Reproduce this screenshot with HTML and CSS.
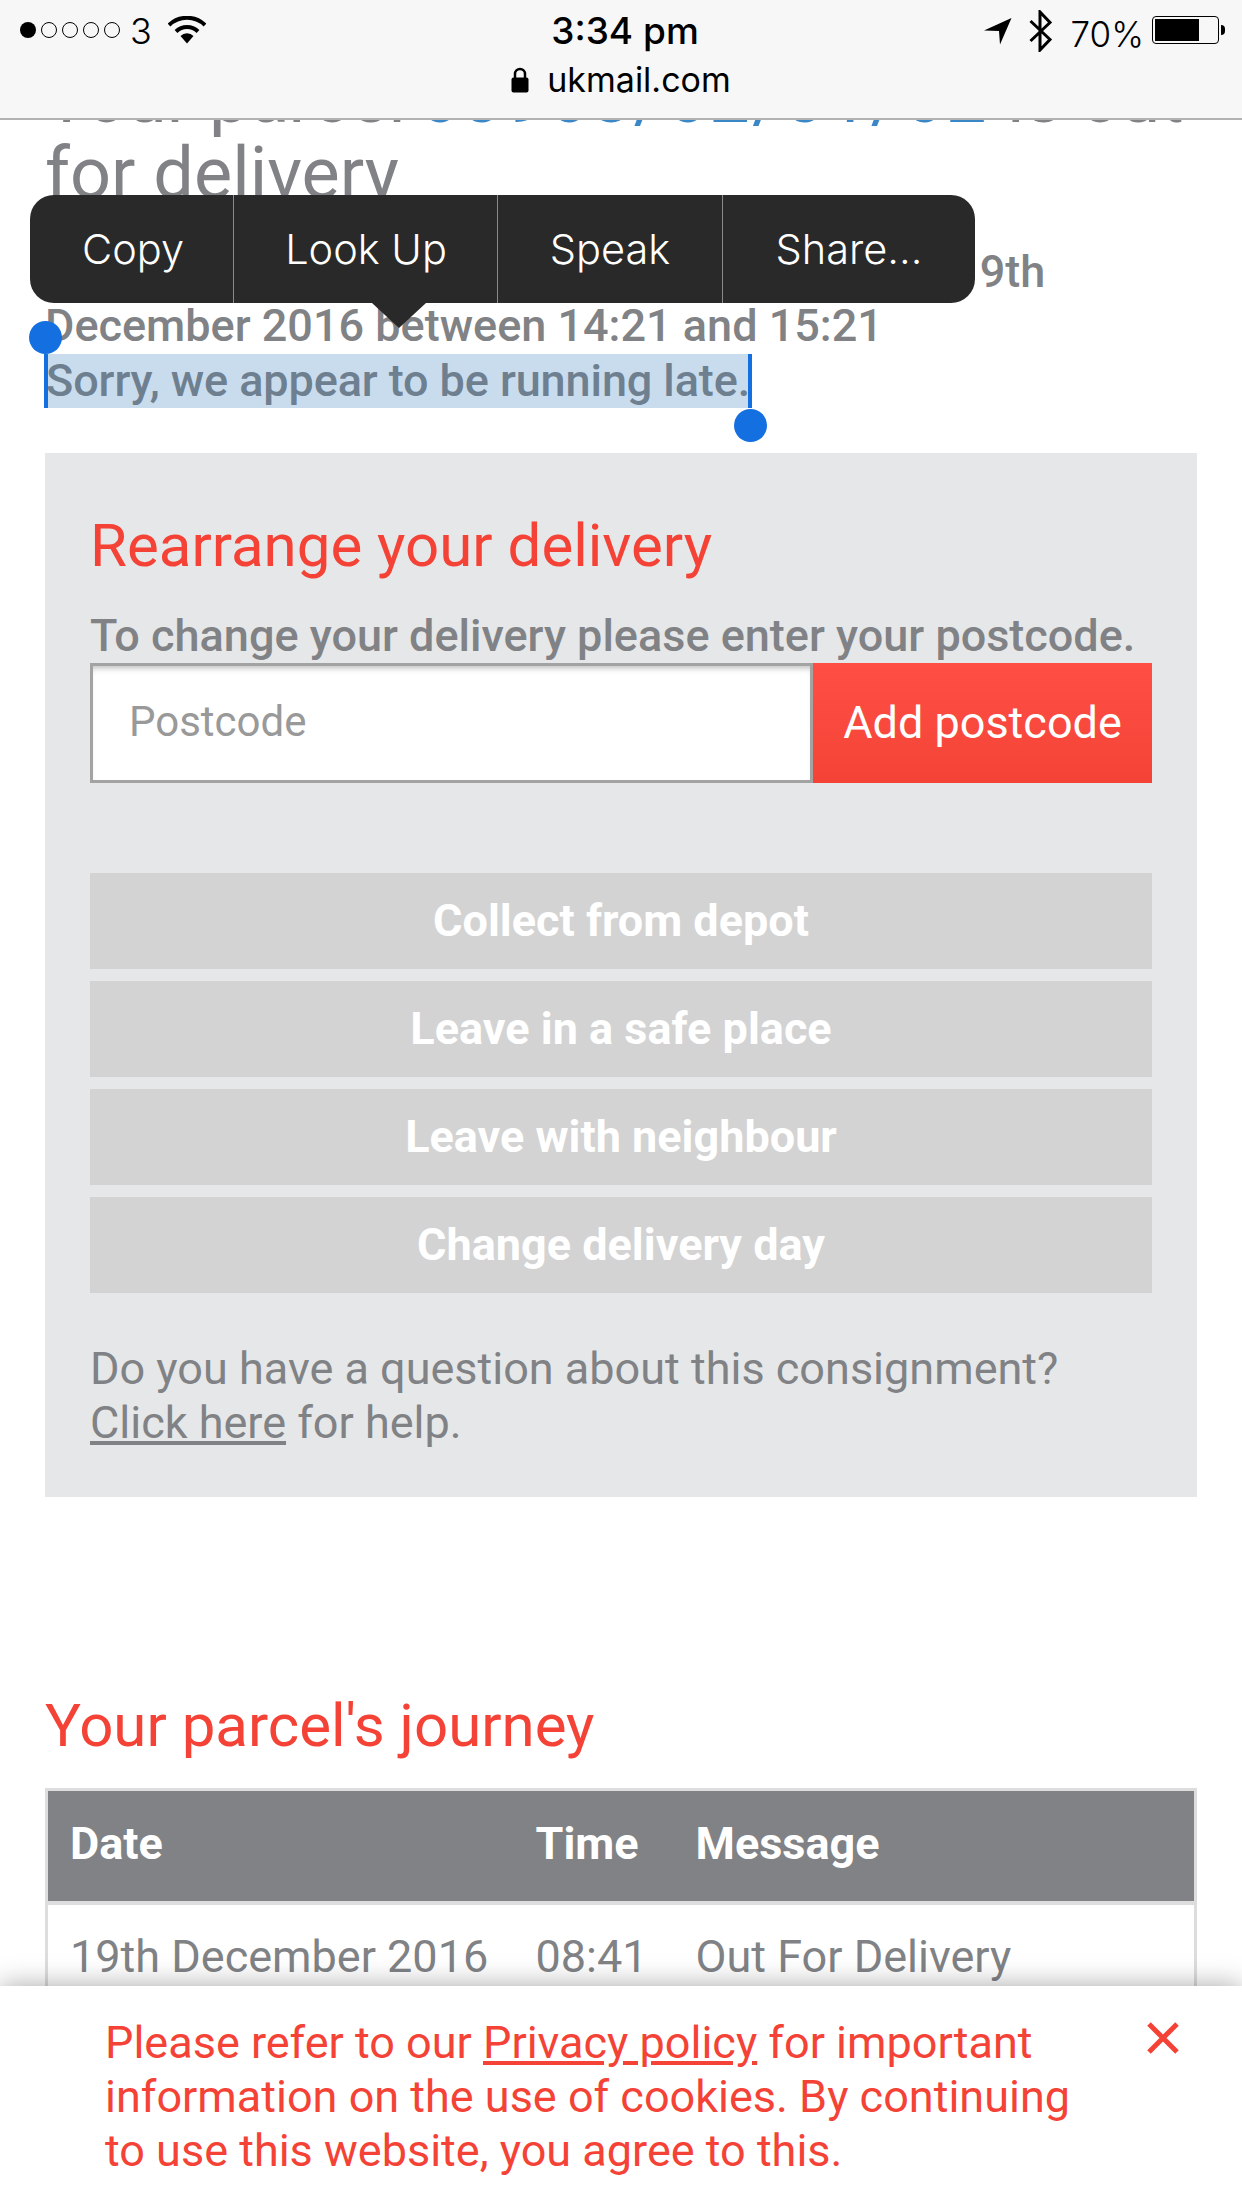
FILE: index.html
```html
<!DOCTYPE html>
<html lang="en">
<head>
  <meta charset="UTF-8">
  <title>UK Mail - Track your parcel</title>
  <meta name="viewport" content="width=device-width, initial-scale=1.0">
  <link rel="stylesheet" href="styles.css">
</head>
<body>

  <div class="topbar">
    <div class="status">
      <div class="status-left">
        <svg class="signal" width="100" height="18" viewBox="0 0 100 18">
          <circle cx="8" cy="9" r="8" fill="#000"/>
          <circle cx="29" cy="9" r="7.5" fill="none" stroke="#000" stroke-width="1"/>
          <circle cx="50" cy="9" r="7.5" fill="none" stroke="#000" stroke-width="1"/>
          <circle cx="71" cy="9" r="7.5" fill="none" stroke="#000" stroke-width="1"/>
          <circle cx="92" cy="9" r="7.5" fill="none" stroke="#000" stroke-width="1"/>
        </svg>
        <span class="carrier">3</span>
        <svg class="wifi" width="38" height="28" viewBox="0 0 38 28">
          <path d="M1 9 A26 26 0 0 1 37 9" fill="none" stroke="#000" stroke-width="4"/>
          <path d="M8 15.5 A16 16 0 0 1 30 15.5" fill="none" stroke="#000" stroke-width="4"/>
          <path d="M12.5 20 A9 9 0 0 1 25.5 20 L19 27.5 Z" fill="#000"/>
        </svg>
      </div>
      <div class="clock">3:34 pm</div>
      <div class="status-right">
        <svg class="locate" width="28" height="27" viewBox="0 0 28 27">
          <path d="M0 12.5 L27.5 0 L16 26.5 L15 13 Z" fill="#000"/>
        </svg>
        <svg class="bluetooth" width="24" height="42" viewBox="0 0 24 42">
          <path d="M1.5 11 L21 29.5 L11 40 L11 2 L21 12.5 L1.5 31" fill="none" stroke="#000" stroke-width="3"/>
        </svg>
        <span class="percent">70%</span>
        <div class="battery"><div class="battery-fill" style="width: 72%"></div></div>
        <div class="battery-nub"></div>
      </div>
    </div>
    <div class="address">
      <svg width="18" height="26" viewBox="0 0 18 26">
        <path d="M4 11 V7 A5 5 0 0 1 14 7 V11" fill="none" stroke="#000" stroke-width="2.5"/>
        <rect x="0.5" y="10.5" width="17" height="15" rx="2" fill="#000"/>
      </svg>
      <span>ukmail.com</span>
    </div>
  </div>

  <div class="page">
    <h1 class="headline">Your parcel <a href="#">60968/62/01/62</a> is out for delivery</h1>
    <p class="eta">Your parcel is now due to be delivered on the 19th December 2016 between 14:21 and 15:21</p>
    <p class="late"><span class="selected">Sorry, we appear to be running late.</span></p>

    <section class="panel">
      <h2 class="panel-title">Rearrange your delivery</h2>
      <p class="panel-intro">To change your delivery please enter your postcode.</p>
      <div class="postcode">
        <div class="postcode-input">Postcode</div>
        <div class="postcode-btn">Add postcode</div>
      </div>
      <div class="options">
        <div class="option">Collect from depot</div>
        <div class="option">Leave in a safe place</div>
        <div class="option">Leave with neighbour</div>
        <div class="option">Change delivery day</div>
      </div>
      <p class="help">Do you have a question about this consignment?<br><a href="#">Click here</a> for help.</p>
    </section>

    <h2 class="journey-title">Your parcel's journey</h2>
    <table class="journey">
      <thead>
        <tr><th class="col-date">Date</th><th class="col-time">Time</th><th>Message</th></tr>
      </thead>
      <tbody>
        <tr><td>19th December 2016</td><td>08:41</td><td>Out For Delivery</td></tr>
      </tbody>
    </table>
  </div>

  <!-- iOS selection callout, sits over the text -->
  <div class="callout">
    <div class="callout-item item-copy">Copy</div>
    <div class="callout-item item-look">Look Up</div>
    <div class="callout-item item-speak">Speak</div>
    <div class="callout-item item-share">Share...</div>
    <div class="callout-arrow"></div>
  </div>
  <div class="handle handle-start"></div>
  <div class="handle handle-end"></div>

  <div class="cookie">
    <p>Please refer to our <a href="#">Privacy policy</a> for important information on the use of cookies. By continuing to use this website, you agree to this.</p>
    <svg class="cookie-close" width="32" height="32" viewBox="0 0 32 32">
      <path d="M2 2 L30 30 M30 2 L2 30" fill="none" stroke="#f44336" stroke-width="5"/>
    </svg>
  </div>

</body>
</html>
```

FILE: styles.css
```css
html, body {
  margin: 0;
  padding: 0;
}
body {
  width: 1242px;
  height: 2208px;
  overflow: hidden;
  position: relative;
  background: #fff;
  color: #808285;
  font-family: Roboto, "Liberation Sans", sans-serif;
}
a {
  color: inherit;
}

/* top bar */
.topbar {
  position: absolute;
  top: 0;
  left: 0;
  right: 0;
  height: 118px;
  background: #f7f7f7;
  border-bottom: 2px solid #b2b2b2;
  color: #000;
  font-family: Inter, "Liberation Sans", sans-serif;
  z-index: 5;
}
.status {
  display: flex;
  justify-content: space-between;
  height: 60px;
  position: relative;
}
.status-left {
  display: flex;
  align-items: flex-start;
  padding: 21px 0 0 20px;
}
.carrier {
  font-size: 36px;
  font-weight: 300;
  line-height: 26px;
  margin: -3px 0 0 10px;
}
.wifi {
  margin: -5px 0 0 16px;
}
.clock {
  position: absolute;
  left: 8px;
  right: 0;
  top: 11px;
  text-align: center;
  font-size: 37px;
  font-weight: 500;
  line-height: 40px;
}
.status-right {
  display: flex;
  align-items: flex-start;
  padding: 10px 17px 0 0;
}
.locate {
  margin-top: 8px;
}
.bluetooth {
  margin-left: 17px;
}
.percent {
  font-size: 35px;
  font-weight: 300;
  line-height: 40px;
  margin: 4px 0 0 18px;
}
.battery {
  width: 67px;
  height: 28px;
  box-sizing: border-box;
  border: 1px solid #000;
  border-radius: 4px;
  padding: 2px;
  margin: 6px 0 0 8px;
}
.battery-fill {
  height: 100%;
  background: #000;
}
.battery-nub {
  width: 4px;
  height: 10px;
  background: #000;
  border-radius: 0 5px 5px 0;
  margin: 15px 0 0 2px;
}
.address {
  display: flex;
  justify-content: center;
  align-items: center;
  gap: 18px;
  font-size: 34px;
  line-height: 40px;
}

/* page */
.page {
  padding: 60px 45px 0;
}
.headline {
  margin: 0;
  font-size: 72px;
  line-height: 76px;
  font-weight: 400;
}
.headline a {
  color: #3a87c8;
  text-decoration: none;
  letter-spacing: 2.6px;
  margin-left: -5px;
}
.eta {
  margin: 33px 0 0;
  font-size: 45px;
  line-height: 54px;
  font-weight: 500;
}
.late {
  margin: 1px 0 0;
  font-size: 45px;
  line-height: 54px;
  font-weight: 500;
}
.selected {
  display: inline-block;
  background: #c9dcee;
  color: #6e7f90;
  letter-spacing: -0.1px;
  margin-left: 1px;
  box-shadow: -2px 0 0 #1470e0, 2px 0 0 #1470e0, inset 2px 0 0 #1470e0, inset -2px 0 0 #1470e0;
}

.panel {
  margin-top: 45px;
  background: #e6e7e8;
  padding: 57px 45px 45px;
  height: 1044px;
  box-sizing: border-box;
}
.panel-title {
  margin: 0;
  color: #f44336;
  font-size: 60px;
  line-height: 72px;
  font-weight: 400;
}
.panel-intro {
  margin: 27px 0 0;
  font-size: 45px;
  line-height: 54px;
  font-weight: 500;
}
.postcode {
  display: flex;
  height: 120px;
}
.postcode-input {
  flex: 1;
  box-sizing: border-box;
  background: #fff;
  border: 3px solid #a3a3a3;
  box-shadow: inset 0 6px 6px -4px #bbb;
  padding-left: 36px;
  font-size: 42px;
  line-height: 112px;
  font-weight: 400;
  color: #999;
}
.postcode-btn {
  width: 339px;
  background: linear-gradient(#ff4f45, #f44336);
  color: #fff;
  font-size: 45px;
  line-height: 120px;
  text-align: center;
}
.options {
  display: flex;
  flex-direction: column;
  gap: 12px;
  margin-top: 90px;
}
.option {
  height: 96px;
  background: #d3d3d3;
  color: #fff;
  font-size: 45px;
  font-weight: 700;
  line-height: 96px;
  text-align: center;
}
.help {
  margin: 49px 0 0;
  font-size: 45px;
  line-height: 54px;
  font-weight: 400;
}

.journey-title {
  margin: 194px 0 0;
  color: #f44336;
  font-size: 60px;
  line-height: 70px;
  font-weight: 400;
}
.journey {
  width: 100%;
  margin-top: 27px;
  border-collapse: collapse;
  border: 3px solid #ddd;
  font-size: 45px;
}
.journey th {
  background: #808285;
  color: #fff;
  height: 113px;
  padding: 0 0 5px 22px;
  box-sizing: border-box;
  text-align: left;
  font-weight: 700;
  border-bottom: 4px solid #ddd;
}
.journey td {
  height: 104px;
  padding: 0 0 0 22px;
  font-weight: 400;
}
.col-date {
  width: 467px;
}
.col-time {
  width: 160px;
}

/* selection menu */
.callout {
  position: absolute;
  left: 30px;
  top: 195px;
  width: 945px;
  height: 108px;
  display: flex;
  background: #292929;
  border-radius: 24px;
  color: #fff;
  font-family: Inter, "Liberation Sans", sans-serif;
  font-size: 41.5px;
  font-weight: 300;
  line-height: 108px;
  text-align: center;
  z-index: 4;
}
.callout-item {
  box-sizing: border-box;
  border-right: 1px solid #8a8a8a;
}
.item-copy { width: 204px; padding-left: 3px; }
.item-look { width: 264px; padding-left: 1px; }
.item-speak { width: 225px; }
.item-share { width: 252px; border-right: 0; }
.callout-arrow {
  position: absolute;
  left: 342px;
  top: 108px;
  width: 0;
  height: 0;
  border-left: 27px solid transparent;
  border-right: 27px solid transparent;
  border-top: 25px solid #292929;
}
.handle {
  position: absolute;
  width: 33px;
  height: 33px;
  border-radius: 50%;
  background: #1470e0;
  z-index: 3;
}
.handle-start {
  left: 29px;
  top: 321px;
}
.handle-end {
  left: 734px;
  top: 409px;
}

/* cookie notice */
.cookie {
  position: absolute;
  left: 0;
  right: 0;
  bottom: 0;
  height: 222px;
  background: #fff;
  box-shadow: 0 0 26px rgba(0, 0, 0, 0.35);
  color: #f44336;
  z-index: 3;
}
.cookie p {
  margin: 30px 0 0 105px;
  width: 980px;
  font-size: 45px;
  line-height: 54px;
  font-weight: 400;
}
.cookie-close {
  position: absolute;
  left: 1147px;
  top: 36px;
}
```
